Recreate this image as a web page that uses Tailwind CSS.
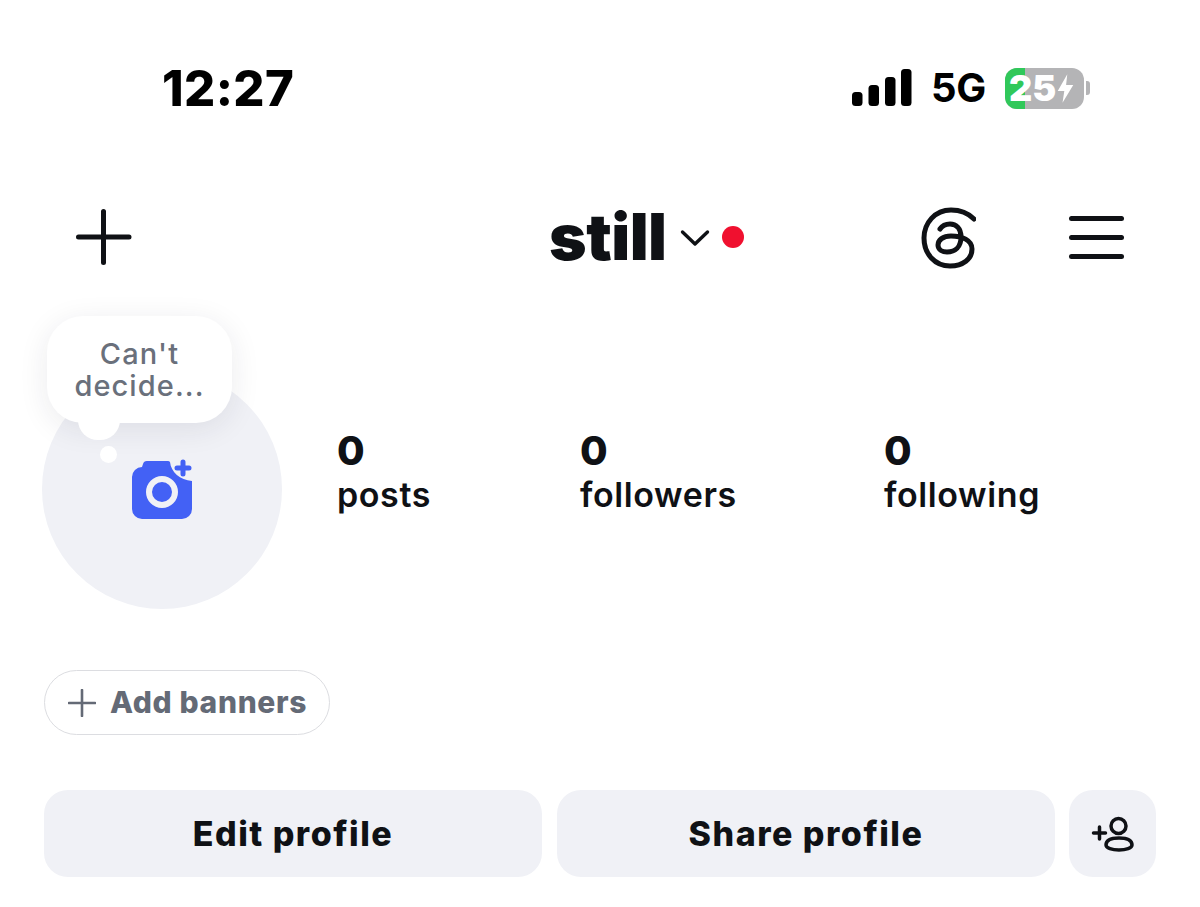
<!DOCTYPE html>
<html>
<head>
<meta charset="utf-8">
<script src="https://cdn.jsdelivr.net/npm/@tailwindcss/browser@4"></script>
</head>
<body class="bg-white">
<div class="w-[1200px] h-[907px] overflow-hidden bg-white text-[#0f1115] font-['Inter','Liberation_Sans',sans-serif]">
  <!-- status bar -->
  <div class="h-[175px] flex items-start justify-between pl-[162px] pr-[110px] pt-[60px]">
    <div class="text-[49px] leading-[58px] font-extrabold text-black tracking-[0.4px]">12:27</div>
    <div class="flex items-center gap-[20px] h-[56px]">
      <svg width="60" height="38" viewBox="0 0 60 38" class="text-black"><g fill="currentColor"><rect x="0" y="23" width="10.5" height="14" rx="3.5"/><rect x="16.5" y="16" width="10.5" height="21" rx="3.5"/><rect x="33" y="8" width="10.5" height="29" rx="3.5"/><rect x="49" y="0" width="10.5" height="37" rx="3.5"/></g></svg>
      <div class="w-[53px] text-[40px] leading-[44px] font-bold text-black whitespace-nowrap -ml-[1px] mr-[1px] tracking-[-0.2px]">5G</div>
      <div class="flex items-center gap-[2px]">
        <div class="relative w-[79px] h-[41px] rounded-[12px] bg-[#b4b4b6] flex items-center">
          <div class="absolute left-0 top-0 bottom-0 w-[20px] rounded-l-[12px] bg-[#30c85a]"></div>
          <div class="relative pl-[4px] text-[36px] leading-[44px] font-black text-white whitespace-nowrap">25</div>
          <svg class="relative shrink-0" width="19" height="31" viewBox="0 0 15 26"><path d="M9 1 L1 15 H6.5 L5 25 L14 10 H8 Z" fill="#fff"/></svg>
        </div>
        <div class="w-[4px] h-[14px] rounded-r-[3px] bg-[#b4b4b6]"></div>
      </div>
    </div>
  </div>
  <!-- header -->
  <div class="relative h-[124px] pl-[76px] pr-[76px] pt-0 flex items-start justify-between">
    <svg class="mt-[34px]" width="56" height="56" viewBox="0 0 56 56"><path d="M27.5 2.5V53.5M2.5 28H53" stroke="#0f1115" stroke-width="5" stroke-linecap="round"/></svg>
    <div class="absolute left-[549px] top-[24px] flex items-center">
      <div class="text-[64px] leading-[76px] font-black tracking-[-0.5px]">still</div>
      <svg class="ml-[13px] mt-[2px]" width="30" height="18" viewBox="0 0 30 18"><path d="M2.5 3 L15 15 L27.5 3" fill="none" stroke="#0f1115" stroke-width="3.4" stroke-linecap="round" stroke-linejoin="round"/></svg>
      <div class="ml-[12px] w-[22px] h-[22px] rounded-full bg-[#f0102f]"></div>
    </div>
    <div class="flex items-start gap-[93px] mt-[22px]">
      <svg class="mt-[10px]" width="56" height="62" viewBox="20 16 56 62"><path d="M74 28 C68 22 60 19 51 19 C35 19 24 32 24 47 C24 63 35 75 50 75 C63 75 72 68 72 58 C72 49 62 45 51 45 C43 45 38 49 38 54 C38 59 43 61 47 61 C55 61 61 56 61 46 C61 37 56 33 50 33 C46 33 42 35 40 38" fill="none" stroke="#0f1115" stroke-width="5" stroke-linecap="round"/></svg>
      <div class="flex flex-col gap-[14px] mt-[19px]">
        <div class="w-[55px] h-[5px] rounded-full bg-[#0f1115]"></div>
        <div class="w-[55px] h-[5px] rounded-full bg-[#0f1115]"></div>
        <div class="w-[55px] h-[5px] rounded-full bg-[#0f1115]"></div>
      </div>
    </div>
  </div>
  <!-- profile -->
  <div class="relative h-[310px] pl-[42px] pt-[70px] flex items-start">
    <div class="w-[240px] h-[240px] rounded-full bg-[#f0f1f6] flex items-center justify-center shrink-0">
      <svg class="mt-[1px]" width="64" height="62" viewBox="0 0 64 62"><path d="M13 5 a4 4 0 0 1 4-3 H38 a3 3 0 0 1 2 1 C41 13 50 21 62 22 V50 a10 10 0 0 1-10 10 H12 A10 10 0 0 1 2 50 V18 A10 10 0 0 1 12 8 Z" fill="#4361f5"/><circle cx="32" cy="33" r="13" fill="none" stroke="#f0f1f6" stroke-width="6"/><path d="M53 3V15M47 9H59" stroke="#4361f5" stroke-width="5" stroke-linecap="round"/></svg>
    </div>
    <!-- thought bubble -->
    <div class="absolute left-[47px] top-[17px] w-[185px] h-[107px] rounded-[36px] bg-white shadow-[0_6px_30px_rgba(30,35,60,0.09)] flex items-center justify-center text-center text-[29px] leading-[32px] font-medium text-[#6a707b] tracking-[1.1px]">Can't<br>decide...</div>
    <div class="absolute left-[78px] top-[116px] w-[42px] h-[25px] rounded-b-[20px] bg-white"></div>
    <div class="absolute left-[100px] top-[147px] w-[17px] h-[17px] rounded-full bg-white"></div>
    <!-- stats -->
    <div class="flex items-start ml-[55px] mt-[60px]">
      <div class="w-[243px]">
        <div class="text-[40px] leading-[44px] font-extrabold">0</div>
        <div class="text-[34px] leading-[43px] font-semibold tracking-[0.6px]">posts</div>
      </div>
      <div class="w-[304px]">
        <div class="text-[40px] leading-[44px] font-extrabold">0</div>
        <div class="text-[34px] leading-[43px] font-semibold tracking-[0.6px]">followers</div>
      </div>
      <div>
        <div class="text-[40px] leading-[44px] font-extrabold">0</div>
        <div class="text-[34px] leading-[43px] font-semibold tracking-[0.6px]">following</div>
      </div>
    </div>
  </div>
  <!-- add banners -->
  <div class="h-[181px] pl-[44px] pt-[61px] box-border">
    <div class="w-[286px] h-[65px] rounded-full border-[1.5px] border-[#dcdde1] flex items-center pl-[23px] gap-[14px] text-[#646a76]">
      <svg width="28" height="28" viewBox="0 0 28 28"><path d="M14 1V27M1 14H27" stroke="#646a76" stroke-width="2.6" stroke-linecap="round"/></svg>
      <span class="text-[30px] font-extrabold leading-[36px] -mt-[2px] tracking-[0.65px]">Add banners</span>
    </div>
  </div>
  <!-- buttons -->
  <div class="flex pl-[44px] gap-[15px]">
    <div class="w-[498px] h-[87px] rounded-[24px] bg-[#f0f1f6] flex items-center justify-center text-[34px] font-extrabold tracking-[1.5px]">Edit profile</div>
    <div class="w-[498px] h-[87px] rounded-[24px] bg-[#f0f1f6] flex items-center justify-center text-[34px] font-extrabold tracking-[1.5px]">Share profile</div>
    <div class="w-[87px] h-[87px] -ml-[1px] rounded-[24px] bg-[#f0f1f6] flex items-center justify-center">
      <svg width="44" height="36" viewBox="0 0 44 36"><g fill="none" stroke="#0f1115" stroke-width="3.5" stroke-linecap="round"><circle cx="27.5" cy="10" r="7.5"/><path d="M15 29 C15 24 21 22 28 22 C35 22 41 24 41 29 C41 32 35 34 28 34 C21 34 15 32 15 29Z"/><path d="M2.5 17H14.5M8.5 11V23"/></g></svg>
    </div>
  </div>
</div>
</body>
</html>
